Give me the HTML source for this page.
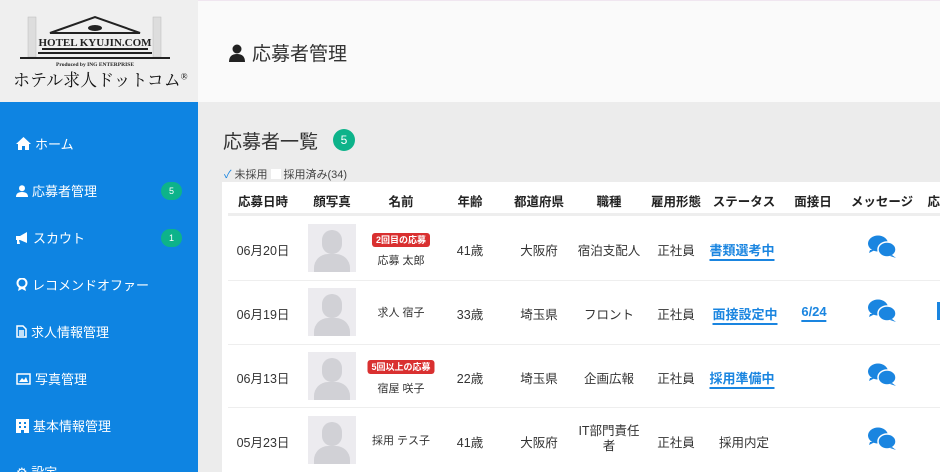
<!DOCTYPE html><html><head><meta charset="utf-8"><style>
*{margin:0;padding:0;box-sizing:border-box}
html{width:940px;height:472px;overflow:hidden}
body{width:940px;height:472px;overflow:hidden;position:relative;background:#ececec;font-family:"Liberation Sans","Noto Sans CJK JP",sans-serif;color:#333}
.logo{position:absolute;left:0;top:0;width:198px;height:102px;background:#efefef}
.side{position:absolute;left:0;top:102px;width:198px;height:370px;background:#0e84e2;overflow:hidden}
.side div{position:absolute;left:16px;color:#fff;font-size:13px;display:flex;align-items:center;gap:4px}
.sb{position:absolute;left:161px;width:21px;height:18px;border-radius:9px;background:#0db38a;color:#fff;font-size:9px;text-align:center;line-height:18px}
.head{position:absolute;left:198px;top:0;width:742px;height:102px;background:#fafafa;border-top:1px solid #f0e6f0}
.card{position:absolute;left:222px;top:182px;width:718px;height:290px;background:#fff}
.c{position:absolute;transform:translateX(-50%);white-space:nowrap;font-size:12.5px;text-align:center}
.h{font-weight:bold;color:#222;top:191px;font-size:12.5px}
.ln{position:absolute;left:228px;width:712px;height:1px;background:#eee}
.ph{position:absolute;left:308px;width:48px;height:48px;background:#ecebef;overflow:hidden}
.ph:before{content:"";position:absolute;left:14px;top:6px;width:20px;height:24px;border-radius:10px;background:#d1d1d6}
.ph:after{content:"";position:absolute;left:6px;top:30px;width:36px;height:24px;border-radius:14px 14px 0 0;background:#d1d1d6}
.tag{background:#d93030;color:#fff;font-size:9px;padding:2px 4px;border-radius:3px;font-weight:bold}
.lk{color:#1a85e0;font-weight:bold;border-bottom:2px solid #1a85e0;padding-bottom:1px;font-size:13px}
</style></head><body>
<div class="logo">
<svg width="198" height="70" viewBox="0 0 198 70" style="position:absolute;left:0;top:0">
<rect x="28" y="17" width="8" height="40" fill="#ddd" stroke="#bbb" stroke-width=".5"/>
<rect x="153" y="17" width="8" height="40" fill="#ddd" stroke="#bbb" stroke-width=".5"/>
<path d="M50 33 L95 17 L140 33 Z" fill="none" stroke="#222" stroke-width="2"/>
<ellipse cx="95" cy="28" rx="7" ry="3" fill="#222"/>
<rect x="42" y="48" width="106" height="2" fill="#222"/><rect x="38" y="52" width="114" height="2" fill="#222"/><rect x="20" y="57" width="150" height="2" fill="#222"/>
<text x="95" y="46" font-family="Liberation Serif" font-size="11" font-weight="bold" text-anchor="middle" fill="#222">HOTEL KYUJIN.COM</text>
<text x="95" y="66" font-family="Liberation Serif" font-size="5.5" font-weight="bold" text-anchor="middle" fill="#222">Produced by ING ENTERPRISE</text>
</svg>
<div style="position:absolute;left:13px;top:66px;font-family:'Liberation Serif','Noto Serif CJK SC',serif;font-size:17px;color:#111">ホテル求人ドットコム<sup style="font-size:9px">®</sup></div>
</div>
<div class="head"><div style="position:absolute;left:30px;top:38px;font-size:19px;color:#333;display:flex;align-items:center;gap:6px"><svg width="18" height="18" viewBox="0 0 18 18"><circle cx="9" cy="5" r="4.5" fill="#222"/><path d="M1 18 Q1 10 9 10 Q17 10 17 18Z" fill="#222"/></svg>応募者管理</div></div>
<div class="side">
<div style="top:32px"><svg width="15" height="13" viewBox="0 0 15 13"><path d="M7.5 0 L15 7 H13 V13 H9 V9 H6 V13 H2 V7 H0Z" fill="#fff"/></svg>ホーム</div>
<div style="top:79px"><svg width="12" height="12" viewBox="0 0 12 12"><circle cx="6" cy="3.2" r="3" fill="#fff"/><path d="M0 12 Q0 7 6 7 Q12 7 12 12Z" fill="#fff"/></svg>応募者管理</div><span class="sb" style="top:80px">5</span>
<div style="top:126px"><svg width="13" height="12" viewBox="0 0 13 12"><path d="M0 4 H4 L11 0 V11 L4 8 H3 L4 12 H1 L1 8 H0Z" fill="#fff"/></svg>スカウト</div><span class="sb" style="top:127px">1</span>
<div style="top:173px"><svg width="12" height="13" viewBox="0 0 12 13"><circle cx="6" cy="5" r="4.5" fill="none" stroke="#fff" stroke-width="2"/><path d="M3 9 L2 13 L6 11 L10 13 L9 9Z" fill="#fff"/></svg>レコメンドオファー</div>
<div style="top:220px"><svg width="11" height="13" viewBox="0 0 11 13"><path d="M1 1 H7 L10 4 V12 H1Z M3 6 H8 M3 8 H8 M3 10 H8" fill="none" stroke="#fff" stroke-width="1.5"/></svg>求人情報管理</div>
<div style="top:267px"><svg width="15" height="12" viewBox="0 0 15 12"><rect x="1" y="1" width="13" height="10" fill="none" stroke="#fff" stroke-width="1.5"/><path d="M3 9 L6 5 L8 7 L10 4 L12 9Z" fill="#fff"/></svg> 写真管理</div>
<div style="top:314px"><svg width="13" height="14" viewBox="0 0 13 14"><path d="M0 0 H13 V14 H8 V11 H5 V14 H0Z" fill="#fff"/><rect x="3" y="3" width="2" height="2" fill="#0e84e2"/><rect x="8" y="3" width="2" height="2" fill="#0e84e2"/><rect x="3" y="7" width="2" height="2" fill="#0e84e2"/><rect x="8" y="7" width="2" height="2" fill="#0e84e2"/></svg> 基本情報管理</div>
<div style="top:360px">⚙ 設定</div>
</div>
<div style="position:absolute;left:223px;top:127px;font-size:19px;color:#333">応募者一覧</div>
<div style="position:absolute;left:333px;top:129px;width:22px;height:22px;border-radius:11px;background:#0db38a;color:#fff;font-size:12px;text-align:center;line-height:22px">5</div>
<div style="position:absolute;left:224px;top:166px;font-size:11px;color:#444;display:flex;align-items:center;gap:3px"><span style="color:#1a85e0">✓</span>未採用 <span style="display:inline-block;width:10px;height:10px;background:#fff"></span> 採用済み(34)</div>
<div class="card"></div>
<div class="ln" style="top:213px;height:3px;background:#eee"></div>
<div class="ln" style="top:280px"></div><div class="ln" style="top:344px"></div><div class="ln" style="top:407px"></div>
<div class="c h" style="left:263px">応募日時</div><div class="c h" style="left:332px">顔写真</div><div class="c h" style="left:401px">名前</div><div class="c h" style="left:470px">年齢</div><div class="c h" style="left:539px">都道府県</div><div class="c h" style="left:609px">職種</div><div class="c h" style="left:676px">雇用形態</div><div class="c h" style="left:744px">ステータス</div><div class="c h" style="left:813px">面接日</div><div class="c h" style="left:882px">メッセージ</div><div class="c h" style="left:940px">応募</div>
<div class="c" style="left:263px;top:240px">06月20日</div><div class="ph" style="top:224px"></div>
<div class="c" style="left:401px;top:232px"><span class="tag">2回目の応募</span></div><div class="c" style="left:401px;top:252px;font-size:11px">応募 太郎</div>
<div class="c" style="left:470px;top:240px">41歳</div><div class="c" style="left:539px;top:240px">大阪府</div><div class="c" style="left:609px;top:240px">宿泊支配人</div><div class="c" style="left:676px;top:240px">正社員</div><div class="c" style="left:742px;top:240px"><span class="lk">書類選考中</span></div>
<div class="c" style="left:263px;top:304px">06月19日</div><div class="ph" style="top:288px"></div>
<div class="c" style="left:401px;top:304px;font-size:11px">求人 宿子</div>
<div class="c" style="left:470px;top:304px">33歳</div><div class="c" style="left:539px;top:304px">埼玉県</div><div class="c" style="left:609px;top:304px">フロント</div><div class="c" style="left:676px;top:304px">正社員</div><div class="c" style="left:745px;top:304px"><span class="lk">面接設定中</span></div><div class="c" style="left:814px;top:304px"><span class="lk">6/24</span></div>
<div style="position:absolute;left:937px;top:302px;width:3px;height:18px;background:#1a85e0"></div>
<div class="c" style="left:263px;top:368px">06月13日</div><div class="ph" style="top:352px"></div>
<div class="c" style="left:401px;top:359px"><span class="tag">5回以上の応募</span></div><div class="c" style="left:401px;top:380px;font-size:11px">宿屋 咲子</div>
<div class="c" style="left:470px;top:368px">22歳</div><div class="c" style="left:539px;top:368px">埼玉県</div><div class="c" style="left:609px;top:368px">企画広報</div><div class="c" style="left:676px;top:368px">正社員</div><div class="c" style="left:742px;top:368px"><span class="lk">採用準備中</span></div>
<div class="c" style="left:263px;top:432px">05月23日</div><div class="ph" style="top:416px"></div>
<div class="c" style="left:401px;top:432px;font-size:11px">採用 テス子</div>
<div class="c" style="left:470px;top:432px">41歳</div><div class="c" style="left:539px;top:432px">大阪府</div><div class="c" style="left:609px;top:424px;line-height:15px">IT部門責任<br>者</div><div class="c" style="left:676px;top:432px">正社員</div><div class="c" style="left:744px;top:432px">採用内定</div>
<svg style="position:absolute;left:868px;top:235px" width="29" height="24" viewBox="0 0 29 24"><ellipse cx="10" cy="8.5" rx="10" ry="8" fill="#1a85e0"/><path d="M2 15 L1 18 L7 15Z" fill="#1a85e0"/><ellipse cx="19" cy="14.5" rx="9" ry="7.5" fill="#1a85e0" stroke="#fff" stroke-width="1.5"/><path d="M24 20 L28 23 L22 21Z" fill="#1a85e0"/></svg>
<svg style="position:absolute;left:868px;top:299px" width="29" height="24" viewBox="0 0 29 24"><ellipse cx="10" cy="8.5" rx="10" ry="8" fill="#1a85e0"/><path d="M2 15 L1 18 L7 15Z" fill="#1a85e0"/><ellipse cx="19" cy="14.5" rx="9" ry="7.5" fill="#1a85e0" stroke="#fff" stroke-width="1.5"/><path d="M24 20 L28 23 L22 21Z" fill="#1a85e0"/></svg>
<svg style="position:absolute;left:868px;top:363px" width="29" height="24" viewBox="0 0 29 24"><ellipse cx="10" cy="8.5" rx="10" ry="8" fill="#1a85e0"/><path d="M2 15 L1 18 L7 15Z" fill="#1a85e0"/><ellipse cx="19" cy="14.5" rx="9" ry="7.5" fill="#1a85e0" stroke="#fff" stroke-width="1.5"/><path d="M24 20 L28 23 L22 21Z" fill="#1a85e0"/></svg>
<svg style="position:absolute;left:868px;top:427px" width="29" height="24" viewBox="0 0 29 24"><ellipse cx="10" cy="8.5" rx="10" ry="8" fill="#1a85e0"/><path d="M2 15 L1 18 L7 15Z" fill="#1a85e0"/><ellipse cx="19" cy="14.5" rx="9" ry="7.5" fill="#1a85e0" stroke="#fff" stroke-width="1.5"/><path d="M24 20 L28 23 L22 21Z" fill="#1a85e0"/></svg>
</body></html>
